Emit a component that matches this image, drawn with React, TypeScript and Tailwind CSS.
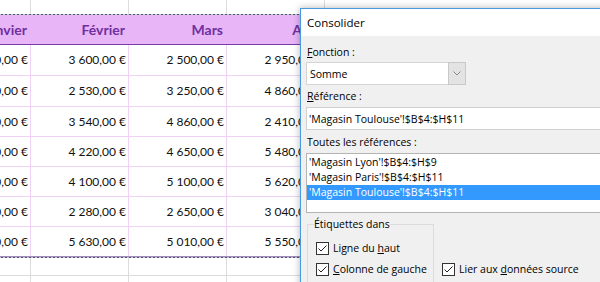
import React from "react";

const feb = ["3 600,00 €", "2 530,00 €", "3 540,00 €", "4 220,00 €", "4 100,00 €", "2 280,00 €", "5 630,00 €"];
const mar = ["2 500,00 €", "3 250,00 €", "4 860,00 €", "4 650,00 €", "5 100,00 €", "2 650,00 €", "5 010,00 €"];
const avr = ["2 950,00 €", "4 860,00 €", "2 410,00 €", "5 480,00 €", "5 620,00 €", "3 040,00 €", "5 550,00 €"];
const jan = ["1 800,00 €", "2 100,00 €", "3 200,00 €", "2 900,00 €", "3 300,00 €", "1 950,00 €", "4 700,00 €"];
const heights = ["h-[31px]", "h-[31px]", "h-[30px]", "h-[30px]", "h-[30px]", "h-[30px]", "h-[30px]"];

function Check() {
  return (
    <div className="w-[13px] h-[13px] border border-[#333333] bg-white flex items-center justify-center shrink-0">
      <svg width="11" height="11" viewBox="0 0 11 11">
        <polyline points="1.5,5.5 4,8 9.5,2.5" fill="none" stroke="#222222" strokeWidth="1" />
      </svg>
    </div>
  );
}

export default function App() {
  return (
    <div className="relative w-[600px] h-[282px] overflow-hidden bg-white">
      {/* Spreadsheet */}
      <div className="-ml-[67px] flex flex-col w-[400px] font-['Lato',sans-serif]">
        <div className="flex h-[14px]">
          {[0, 1, 2, 3].map((i) => (
            <div key={i} className="w-[98px] border-r border-[#dcdcdc]" />
          ))}
        </div>
        <div className="h-[1px] bg-[repeating-linear-gradient(90deg,#4f5968_0_2px,#c4c8d4_2px_4px)]" />
        <div className="flex h-[30px] bg-[#e8b5f7] border-b border-[#7a3aa6] text-[14px] font-bold text-[#7030a0]">
          {["Janvier", "Février", "Mars", "Avril"].map((h) => (
            <div key={h} className="w-[98px] flex items-center justify-end pr-[3px] border-r border-[#e8b5f7]">
              {h}
            </div>
          ))}
        </div>
        {feb.map((_, r) => (
          <div
            key={r}
            className={`flex ${heights[r]} text-[12px] text-[#111111] border-b ${
              r === 6 ? "border-[#a68abf]" : "border-[#f0d2f7]"
            }`}
          >
            {[jan[r], feb[r], mar[r], avr[r]].map((v, c) => (
              <div key={c} className="w-[98px] flex items-center justify-end pr-[2px] border-r border-[#f0d2f7]">
                {v}
              </div>
            ))}
          </div>
        ))}
        <div className="h-[1px] bg-[repeating-linear-gradient(90deg,#4f5968_0_2px,#c4c8d4_2px_4px)]" />
        <div className="flex h-[18px] border-b border-[#dcdcdc]">
          {[0, 1, 2, 3].map((i) => (
            <div key={i} className="w-[98px] border-r border-[#dcdcdc]" />
          ))}
        </div>
        <div className="flex h-[20px]">
          {[0, 1, 2, 3].map((i) => (
            <div key={i} className="w-[98px] border-r border-[#dcdcdc]" />
          ))}
        </div>
      </div>

      {/* Dialog */}
      <div className="absolute left-[300px] top-[8px] w-[330px] h-[300px] border border-[#4a98e0] bg-[#f0f0f0] shadow-[0_0_7px_rgba(0,0,0,0.3)] font-['Open_Sans',sans-serif] text-[#000000]">
        <div className="h-[27px] bg-white flex items-center pl-[6px] text-[11.5px]">Consolider</div>
        <div className="pl-[5px] flex flex-col text-[10.5px] leading-4">
          <div className="mt-[8px] ml-[1px]">
            <span className="underline">F</span>onction :
          </div>
          <div className="mt-[2px] w-[160px] h-[23px] flex bg-white border border-[#d4d4d4]">
            <div className="flex-1 flex items-center pl-[3px]">Somme</div>
            <div className="w-[18px] -my-[1px] -mr-[1px] bg-[#e3e3e3] border border-[#c8c8c8] flex items-center justify-center">
              <svg width="8" height="5" viewBox="0 0 8 5">
                <polyline points="0.5,0.5 4,4 7.5,0.5" fill="none" stroke="#8a8a8a" strokeWidth="1" />
              </svg>
            </div>
          </div>
          <div className="mt-[3px] ml-[1px]">
            <span className="underline">R</span>éférence :
          </div>
          <div className="mt-[3px] w-[320px] h-[23px] flex items-center bg-white border border-[#d0d0d0] pl-[2px]">
            'Magasin Toulouse'!$B$4:$H$11
          </div>
          <div className="mt-[4px] ml-[1px]">Toutes les références :</div>
          <div className="mt-[3px] w-[320px] h-[60px] bg-white border border-[#b4b4b4] pt-[1px] leading-[15px]">
            <div className="h-[15px] pl-[2px]">'Magasin Lyon'!$B$4:$H$9</div>
            <div className="h-[15px] pl-[2px]">'Magasin Paris'!$B$4:$H$11</div>
            <div className="h-[15px] pl-[2px] bg-[#3399ff] text-white">'Magasin Toulouse'!$B$4:$H$11</div>
          </div>
          <div className="flex items-start mt-[3px]">
            <fieldset className="ml-[1px] w-[127px] h-[80px] border border-[#dcdcdc] pl-[6px]">
              <legend className="px-0 leading-4">Étiquettes dans</legend>
              <div className="ml-[2px] mt-[8px] h-[16px] flex items-center gap-[4px]">
                <Check />
                <span>
                  Ligne du <span className="underline">h</span>aut
                </span>
              </div>
              <div className="ml-[2px] mt-[5px] h-[16px] flex items-center gap-[4px]">
                <Check />
                <span>
                  <span className="underline">C</span>olonne de gauche
                </span>
              </div>
            </fieldset>
            <div className="ml-[8px] mt-[45px] h-[16px] flex items-center gap-[4px]">
              <Check />
              <span>
                Lier aux <span className="underline">d</span>onnées source
              </span>
            </div>
          </div>
        </div>
      </div>
    </div>
  );
}
